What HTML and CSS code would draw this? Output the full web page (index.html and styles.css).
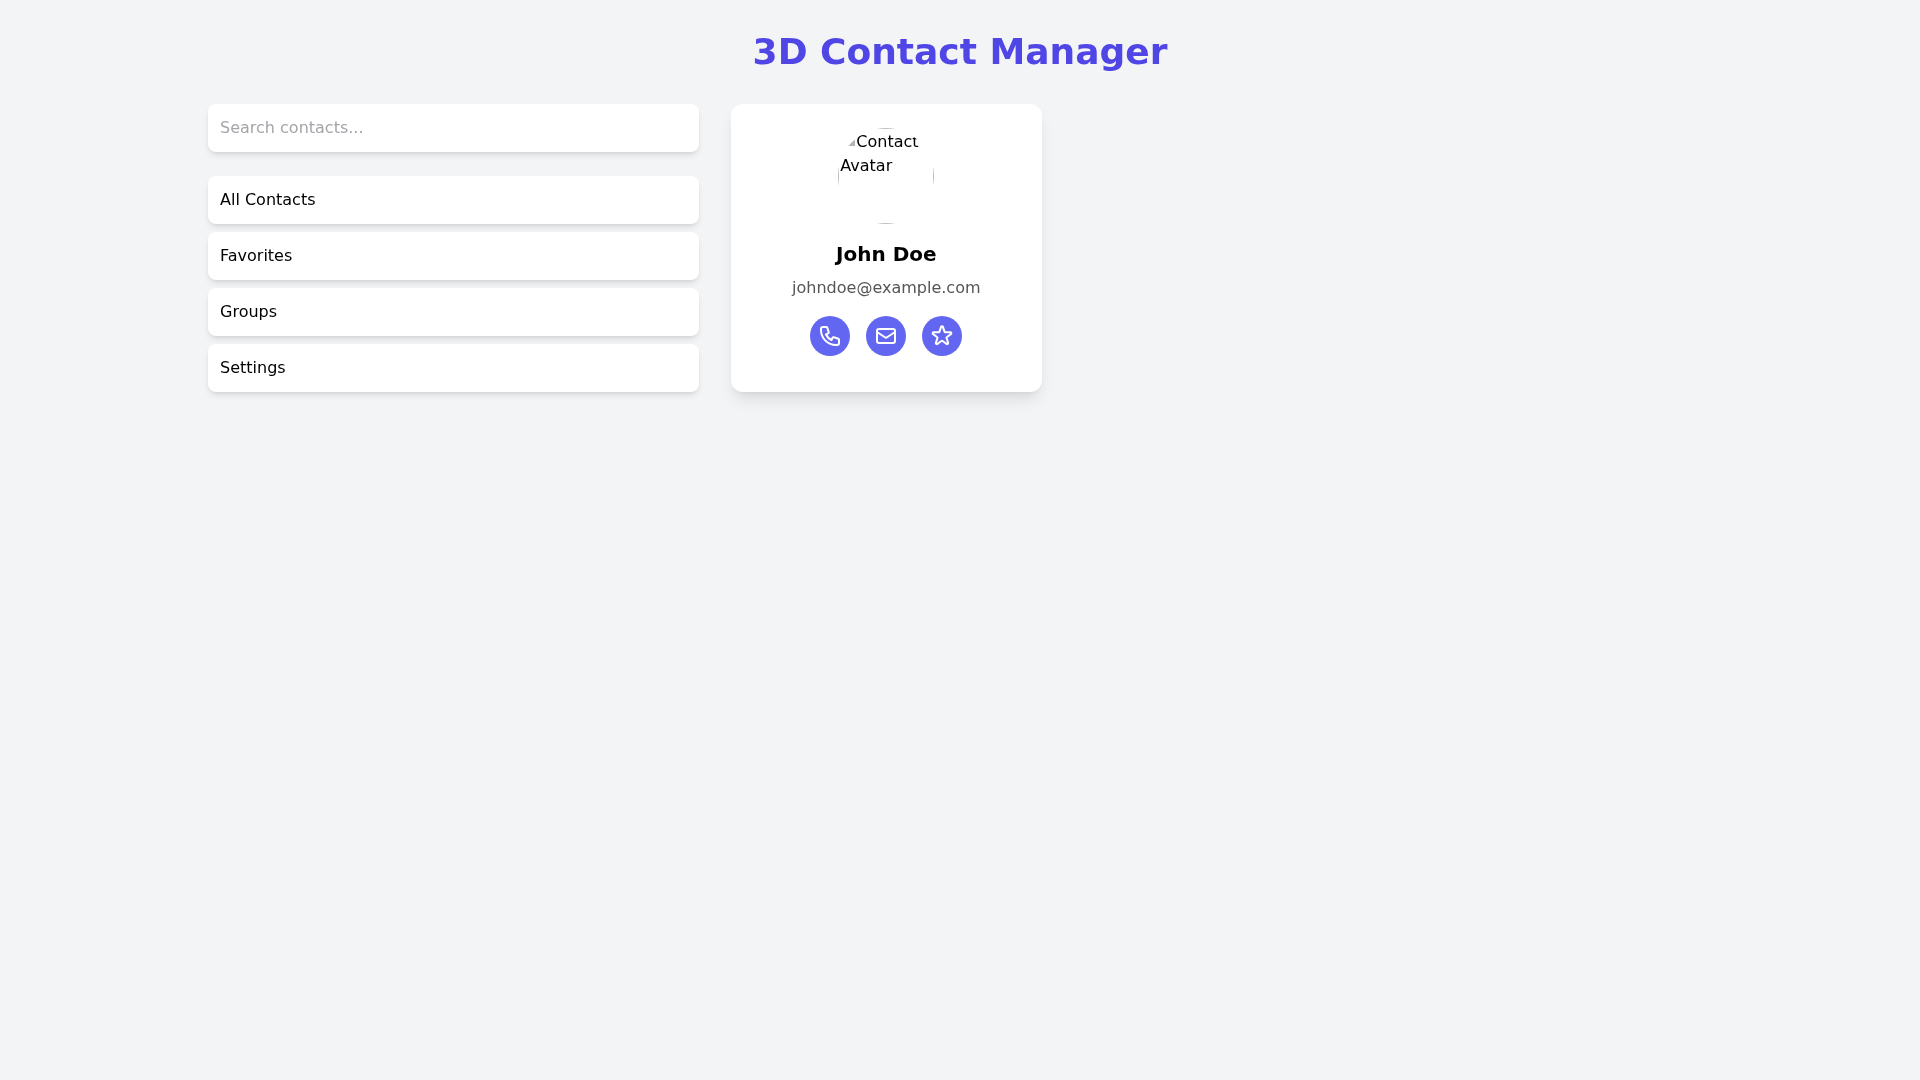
FILE: index.html
```html
<!DOCTYPE html>
<html lang="en">
<head>
<meta charset="utf-8">
<title>3D Contact Manager</title>
<link rel="stylesheet" href="styles.css">
</head>
<body>
<main class="container">
  <h1 class="title">3D Contact Manager</h1>
  <div class="layout">
    <section class="sidebar">
      <input class="search" type="text" placeholder="Search contacts...">
      <nav class="menu">
        <div class="menu-item">All Contacts</div>
        <div class="menu-item">Favorites</div>
        <div class="menu-item">Groups</div>
        <div class="menu-item">Settings</div>
      </nav>
    </section>
    <article class="card">
      <div class="avatar">
        <div class="alt"><svg class="broken" width="16" height="16" viewBox="0 0 16 16"><rect x="4" y="9" width="11" height="7" fill="#b4b4b4"/></svg>Contact Avatar</div>
      </div>
      <h2 class="name">John Doe</h2>
      <p class="email">johndoe@example.com</p>
      <div class="actions">
        <button class="action"><svg viewBox="0 0 24 24" width="24" height="24" fill="none" stroke="currentColor" stroke-width="2" stroke-linecap="round" stroke-linejoin="round"><path d="M3 5a2 2 0 0 1 2-2h3.28a1 1 0 0 1 .948.684l1.498 4.493a1 1 0 0 1-.502 1.21l-2.257 1.13a11.042 11.042 0 0 0 5.516 5.516l1.13-2.257a1 1 0 0 1 1.21-.502l4.493 1.498a1 1 0 0 1 .684.949V19a2 2 0 0 1-2 2h-1C9.716 21 3 14.284 3 6V5z"/></svg></button>
        <button class="action"><svg viewBox="0 0 24 24" width="24" height="24" fill="none" stroke="currentColor" stroke-width="2" stroke-linecap="round" stroke-linejoin="round"><path d="M3 8l7.89 5.26a2 2 0 0 0 2.22 0L21 8M5 19h14a2 2 0 0 0 2-2V7a2 2 0 0 0-2-2H5a2 2 0 0 0-2 2v10a2 2 0 0 0 2 2z"/></svg></button>
        <button class="action"><svg viewBox="0 0 24 24" width="24" height="24" fill="none" stroke="currentColor" stroke-width="2" stroke-linecap="round" stroke-linejoin="round"><path d="M11.049 2.927c.3-.921 1.603-.921 1.902 0l1.519 4.674a1 1 0 0 0 .95.69h4.915c.969 0 1.371 1.24.588 1.81l-3.976 2.888a1 1 0 0 0-.363 1.118l1.518 4.674c.3.922-.755 1.688-1.538 1.118l-3.976-2.888a1 1 0 0 0-1.176 0l-3.976 2.888c-.783.57-1.838-.197-1.538-1.118l1.518-4.674a1 1 0 0 0-.363-1.118l-3.976-2.888c-.784-.57-.38-1.81.588-1.81h4.914a1 1 0 0 0 .951-.69l1.519-4.674z"/></svg></button>
      </div>
    </article>
  </div>
</main>
</body>
</html>
```
FILE: styles.css
```css
* { box-sizing: border-box; }
html, body { margin: 0; min-height: 100vh; }
body {
  background: #f3f4f6;
  font-family: "DejaVu Sans", sans-serif;
  font-size: 16px;
  line-height: 24px;
  color: #000;
}
.container {
  width: 1536px;
  margin: 0 auto;
  padding: 32px 16px;
  will-change: transform;
}
.title {
  margin: 0 0 32px;
  font-size: 36px;
  line-height: 40px;
  font-weight: 700;
  color: #4f46e5;
  text-align: center;
}
.layout {
  display: flex;
  gap: 32px;
  align-items: stretch;
}
.sidebar { width: 491px; }
.search {
  display: block;
  width: 100%;
  height: 48px;
  padding: 11px 12px 13px;
  border: 0;
  border-radius: 8px;
  background: #fff;
  font: 16px/24px "DejaVu Sans", sans-serif;
  color: #000;
  outline: none;
  box-shadow: 0 4px 6px -1px rgba(0,0,0,.1), 0 2px 4px -2px rgba(0,0,0,.1);
}
.search::placeholder { color: #a3a5a9; opacity: 1; }
.menu {
  display: flex;
  flex-direction: column;
  gap: 8px;
  margin-top: 24px;
}
.menu-item {
  height: 48px;
  padding: 12px;
  border-radius: 8px;
  background: #fff;
  box-shadow: 0 4px 6px -1px rgba(0,0,0,.1), 0 2px 4px -2px rgba(0,0,0,.1);
}
.card {
  width: 310.6px;
  padding: 24px;
  border-radius: 12px;
  background: #fff;
  display: flex;
  flex-direction: column;
  align-items: center;
  box-shadow: 0 10px 15px -3px rgba(0,0,0,.1), 0 4px 6px -4px rgba(0,0,0,.1);
}
.avatar {
  position: relative;
  width: 96px;
  height: 96px;
  border-radius: 50%;
  overflow: hidden;
  margin-bottom: 16px;
}
.alt {
  position: absolute;
  inset: 0;
  padding: 1px;
  overflow: hidden;
  border: 1px solid #c0c0c0;
}
.broken { vertical-align: top; margin-top: 0; }
.name {
  margin: 0;
  font-size: 20px;
  line-height: 28px;
  font-weight: 700;
}
.email {
  margin: 8px 0 0;
  color: #555;
}
.actions {
  display: flex;
  gap: 16px;
  margin-top: 16px;
}
.action {
  width: 40px;
  height: 40px;
  padding: 8px;
  border: 0;
  border-radius: 50%;
  background: #6366f1;
  color: #fff;
}
.action svg { display: block; }
```
